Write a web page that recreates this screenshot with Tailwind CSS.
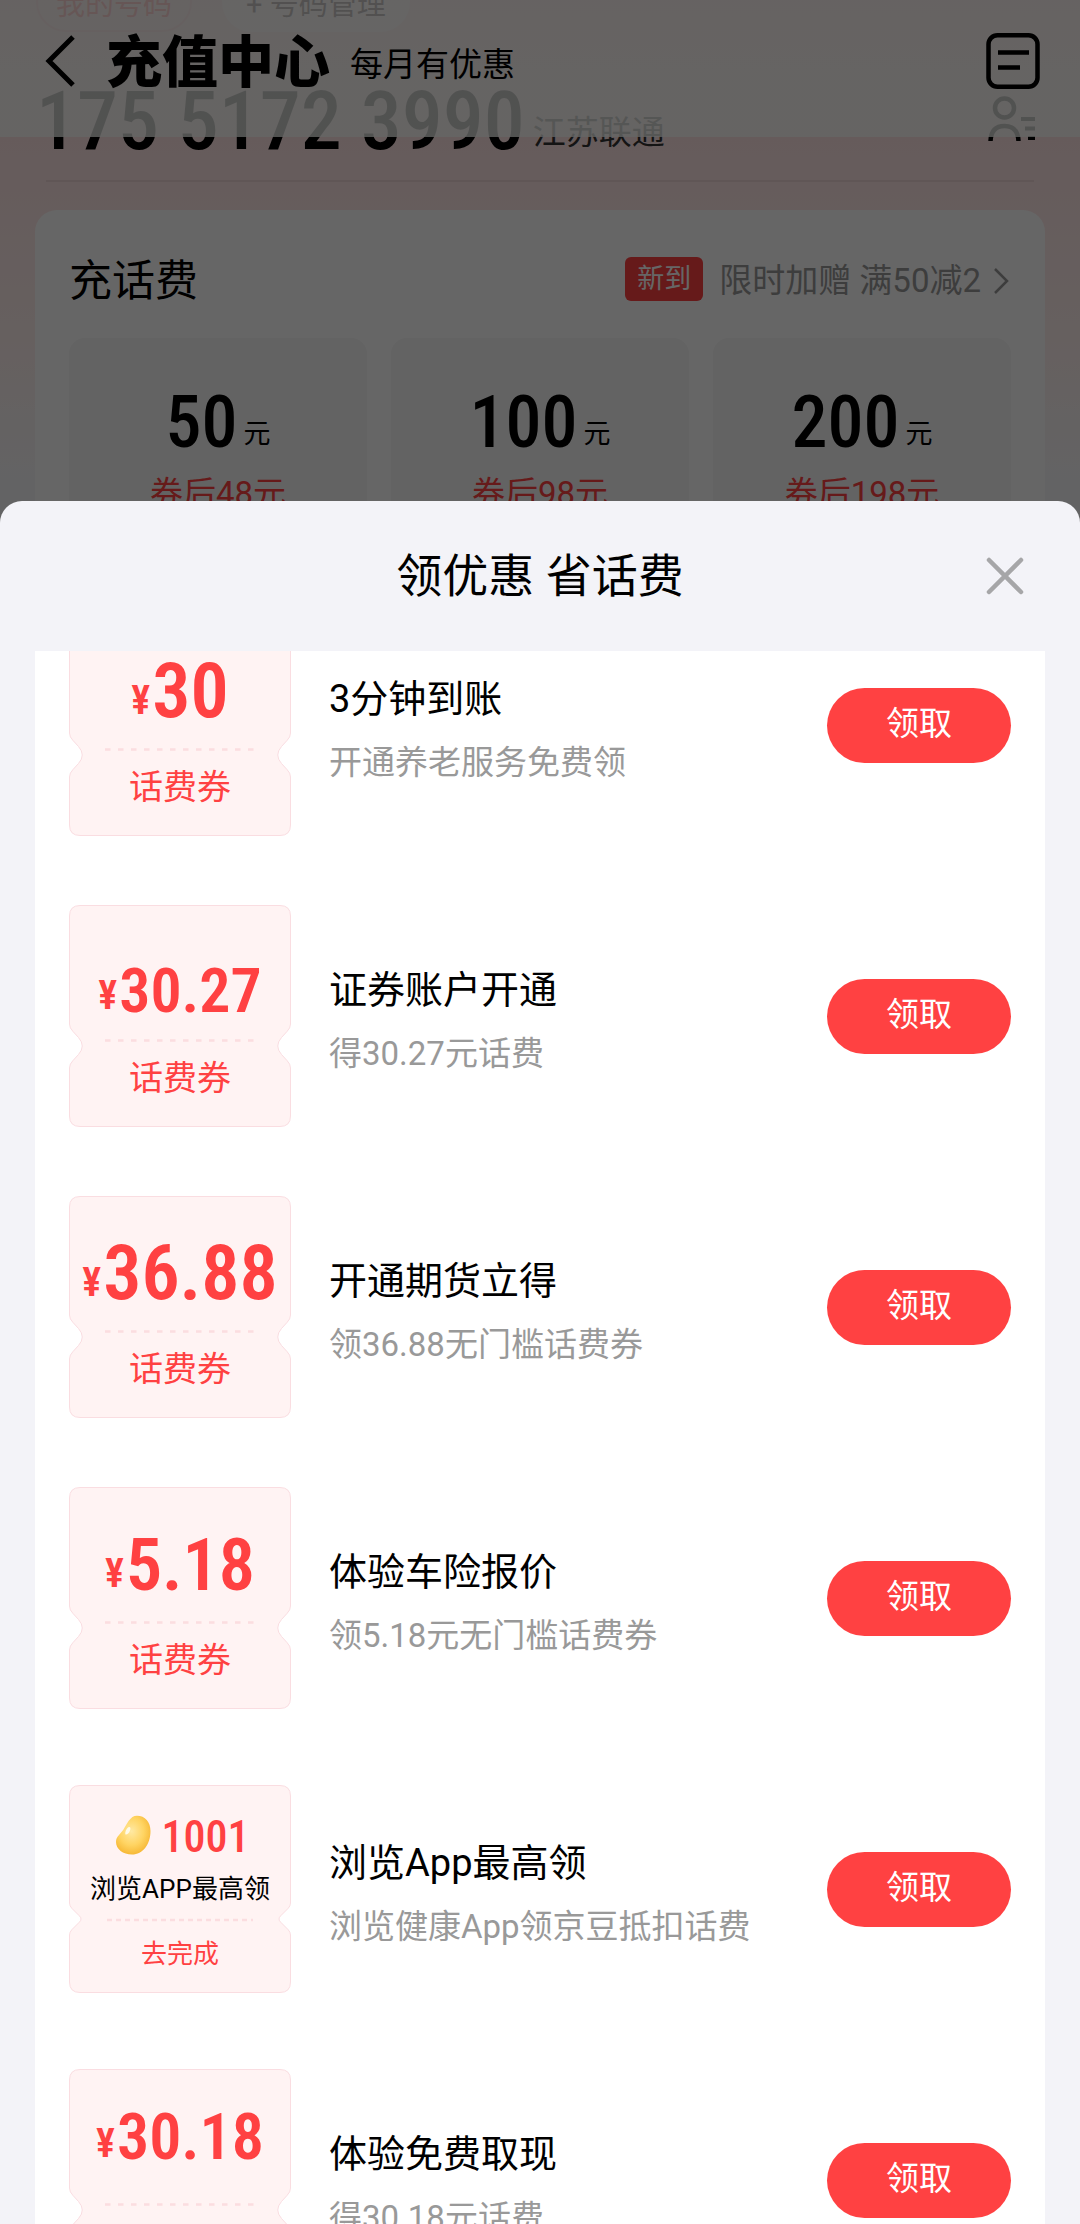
<!DOCTYPE html>
<html lang="zh-CN">
<head>
<meta charset="utf-8">
<meta name="viewport" content="width=device-width, initial-scale=1">
<title>充值中心</title>
<script src="https://cdn.jsdelivr.net/npm/@tailwindcss/browser@4"></script>
</head>
<body class="bg-[#f8f8fa] font-[Roboto,'Noto_Sans_CJK_SC',sans-serif] text-black">
<svg class="hidden" aria-hidden="true">
  <defs>
    <symbol id="ticket" viewBox="0 0 222 222" preserveAspectRatio="none">
      <path d="M11 .5H211Q221.500 .5 221.500 11V119Q221.500 123 218 126.500L212.500 132.500Q205 141 212.500 149.500L218 155.500Q221.500 159 221.500 163V211Q221.500 221.500 211 221.500H11Q.5 221.500 .5 211V163Q.5 159 4 155.500L9.500 149.500Q17 141 9.500 132.500L4 126.500Q.5 123 .5 119V11Q.5 .5 11 .5Z" fill="#fff3f3" stroke="#fadde1"/>
      <path d="M36 135.500H186" stroke="#fbdde0" stroke-width="2.500" stroke-dasharray="5.500 7.500"/>
    </symbol>
  </defs>
</svg>

<div class="relative h-screen overflow-hidden bg-linear-to-b from-[#ffe4e4] from-[137px] via-[#fff0ee] via-[340px] to-[#f8f8fa] to-[480px]">
  <header class="absolute inset-x-0 top-0 z-10 flex h-[137px] items-start justify-between bg-linear-to-b from-[#fffbfa]/80 to-[#fdfffc]/80 to-60% px-10 pt-6">
    <div class="flex items-start">
      <button type="button" aria-label="返回" class="flex h-[74px] w-[66px] items-center pl-1">
        <svg class="h-[52px] w-8" viewBox="0 0 32 52" fill="none" stroke="#000" stroke-width="5"><path d="M29 2L5 26L29 50"/></svg>
      </button>
      <h1 class="pt-0.5 text-[56px] leading-[74px] font-black">充值中心</h1>
      <p class="pt-1 pl-5 text-[33px] leading-[74px]">每月有优惠</p>
    </div>
    <button type="button" aria-label="订单" class="flex h-[74px] items-center">
      <svg class="h-14 w-[54px]" viewBox="0 0 54 56" fill="none" stroke="#000" stroke-width="4.500"><rect x="2.500" y="2.250" width="49" height="51.500" rx="9"/><path d="M12 19.500H43M12 34.500H34"/></svg>
    </button>
  </header>

  <main>
    <nav class="-mt-7 flex gap-[30px] px-9 text-[29px] leading-[66px]">
      <a href="#" class="h-[60px] rounded-full border-2 border-[#ffc4c8] bg-[#ffe6e6] px-[18px] leading-[62px] text-[#ff4142]">我的号码</a>
      <a href="#" class="h-[60px] rounded-full bg-white px-6">+ 号码管理</a>
    </nav>
    <section class="mt-12 flex items-end justify-between pr-10 pl-9">
      <div class="flex items-end gap-2">
        <p class="font-['Roboto_Condensed',Roboto,sans-serif] text-[82px] leading-[82px] font-medium">175 5172 3990</p>
        <p class="pb-[13px] text-[33px] leading-8 text-[#333]">江苏联通</p>
      </div>
      <button type="button" aria-label="通讯录" class="mr-1 mb-5">
        <svg class="h-[46px] w-12" viewBox="0 0 48 46" fill="none" stroke="#000" stroke-width="4.500"><circle cx="16.500" cy="12" r="9.500"/><path d="M2.500 45C3 34 9 30 16.500 30S30 34 30.500 45"/><path d="M33 23H47M37 32.500H47M40 42H47" stroke-width="4"/></svg>
      </button>
    </section>
    <hr class="mx-[46px] mt-[18px] border-t-2 border-[#f0d8d8]">
    <section class="mx-[35px] mt-[28px] rounded-[22px] bg-white px-[34px] pt-[43px] pb-10">
      <div class="flex items-center justify-between">
        <h2 class="text-[43px] leading-[56px]">充话费</h2>
        <a href="#" class="flex items-center text-[33px] leading-[56px] text-[#999]">
          <span class="mr-4 mb-1 rounded-md bg-[#ff4142] px-3 text-[27px] leading-[44px] text-white">新到</span>
          限时加赠 满50减2
          <svg class="mr-0.5 ml-3 h-7 w-4" viewBox="0 0 16 28" fill="none" stroke="currentColor" stroke-width="2.500"><path d="M2 2L14 14L2 26"/></svg>
        </a>
      </div>
      <div class="mt-[29px] grid grid-cols-3 gap-6 text-center">
        <div class="rounded-2xl bg-[#f7f7f7] pt-[50px] pb-8">
          <p class="flex items-end justify-center gap-1.5"><span class="font-['Roboto_Condensed',Roboto,sans-serif] text-[72px] leading-[70px] font-medium">50</span><span class="pb-1.5 text-[27px] leading-9">元</span></p>
          <p class="mt-3 text-[33px] leading-[48px] text-[#ff4142]">券后48元</p>
        </div>
        <div class="rounded-2xl bg-[#f7f7f7] pt-[50px] pb-8">
          <p class="flex items-end justify-center gap-1.5"><span class="font-['Roboto_Condensed',Roboto,sans-serif] text-[72px] leading-[70px] font-medium">100</span><span class="pb-1.5 text-[27px] leading-9">元</span></p>
          <p class="mt-3 text-[33px] leading-[48px] text-[#ff4142]">券后98元</p>
        </div>
        <div class="rounded-2xl bg-[#f7f7f7] pt-[50px] pb-8">
          <p class="flex items-end justify-center gap-1.5"><span class="font-['Roboto_Condensed',Roboto,sans-serif] text-[72px] leading-[70px] font-medium">200</span><span class="pb-1.5 text-[27px] leading-9">元</span></p>
          <p class="mt-3 text-[33px] leading-[48px] text-[#ff4142]">券后198元</p>
        </div>
      </div>
    </section>
  </main>
</div>

<div class="fixed inset-0 z-20 bg-black/60"></div>

<section role="dialog" aria-labelledby="sheet-title" class="fixed inset-x-0 top-[501px] bottom-0 z-30 flex flex-col rounded-t-[22px] bg-[#f3f3f8]">
  <div class="grid h-[150px] shrink-0 grid-cols-[1fr_auto_1fr] items-center">
    <h2 id="sheet-title" class="col-start-2 text-[46px] leading-[60px]">领优惠 省话费</h2>
    <button type="button" aria-label="关闭" class="mr-14 justify-self-end">
      <svg class="size-[38px]" viewBox="0 0 38 38" fill="none" stroke="#a6a6a8" stroke-width="4.500" stroke-linecap="round"><path d="M3 3L35 35M35 3L3 35"/></svg>
    </button>
  </div>
  <div class="mx-[35px] min-h-0 flex-1 overflow-hidden bg-white">
    <ul class="-mt-[37px] flex flex-col gap-[69px] px-[34px]">
      <li class="flex h-[222px] items-center">
        <div class="relative size-[222px] shrink-0 text-center text-[#ff4142]">
          <svg class="absolute inset-0 size-full"><use href="#ticket"/></svg>
          <div class="relative flex h-[135px] flex-col justify-end pb-5 font-['Roboto_Condensed',Roboto,sans-serif] font-semibold">
            <p class="flex items-end justify-center gap-0.5 leading-none"><span class="pb-2 text-[40px]">¥</span><span class="text-[76px] leading-none">30</span></p>
          </div>
          <p class="relative pt-3.5 text-[34px] leading-[48px]">话费券</p>
        </div>
        <div class="min-w-0 flex-1 pt-2 pl-[38px]">
          <h3 class="text-[38px] leading-[56px]">3分钟到账</h3>
          <p class="mt-3 text-[33px] leading-[48px] text-[#999]">开通养老服务免费领</p>
        </div>
        <button type="button" class="h-[75px] w-[184px] shrink-0 rounded-full bg-[#ff4142] pb-0.5 text-[33px] text-white">领取</button>
      </li>
      <li class="flex h-[222px] items-center">
        <div class="relative size-[222px] shrink-0 text-center text-[#ff4142]">
          <svg class="absolute inset-0 size-full"><use href="#ticket"/></svg>
          <div class="relative flex h-[135px] flex-col justify-end pb-[18px] font-['Roboto_Condensed',Roboto,sans-serif] font-semibold">
            <p class="flex items-end justify-center gap-0.5 leading-none"><span class="pb-1.5 text-[40px]">¥</span><span class="text-[62px] leading-none">30.27</span></p>
          </div>
          <p class="relative pt-3.5 text-[34px] leading-[48px]">话费券</p>
        </div>
        <div class="min-w-0 flex-1 pt-2 pl-[38px]">
          <h3 class="text-[38px] leading-[56px]">证券账户开通</h3>
          <p class="mt-3 text-[33px] leading-[48px] text-[#999]">得30.27元话费</p>
        </div>
        <button type="button" class="h-[75px] w-[184px] shrink-0 rounded-full bg-[#ff4142] pb-0.5 text-[33px] text-white">领取</button>
      </li>
      <li class="flex h-[222px] items-center">
        <div class="relative size-[222px] shrink-0 text-center text-[#ff4142]">
          <svg class="absolute inset-0 size-full"><use href="#ticket"/></svg>
          <div class="relative flex h-[135px] flex-col justify-end pb-5 font-['Roboto_Condensed',Roboto,sans-serif] font-semibold">
            <p class="flex items-end justify-center gap-0.5 leading-none"><span class="pb-2 text-[40px]">¥</span><span class="text-[76px] leading-none">36.88</span></p>
          </div>
          <p class="relative pt-3.5 text-[34px] leading-[48px]">话费券</p>
        </div>
        <div class="min-w-0 flex-1 pt-2 pl-[38px]">
          <h3 class="text-[38px] leading-[56px]">开通期货立得</h3>
          <p class="mt-3 text-[33px] leading-[48px] text-[#999]">领36.88无门槛话费券</p>
        </div>
        <button type="button" class="h-[75px] w-[184px] shrink-0 rounded-full bg-[#ff4142] pb-0.5 text-[33px] text-white">领取</button>
      </li>
      <li class="flex h-[222px] items-center">
        <div class="relative size-[222px] shrink-0 text-center text-[#ff4142]">
          <svg class="absolute inset-0 size-full"><use href="#ticket"/></svg>
          <div class="relative flex h-[135px] flex-col justify-end pb-5 font-['Roboto_Condensed',Roboto,sans-serif] font-semibold">
            <p class="flex items-end justify-center gap-0.5 leading-none"><span class="pb-2 text-[40px]">¥</span><span class="text-[72px] leading-none">5.18</span></p>
          </div>
          <p class="relative pt-3.5 text-[34px] leading-[48px]">话费券</p>
        </div>
        <div class="min-w-0 flex-1 pt-2 pl-[38px]">
          <h3 class="text-[38px] leading-[56px]">体验车险报价</h3>
          <p class="mt-3 text-[33px] leading-[48px] text-[#999]">领5.18元无门槛话费券</p>
        </div>
        <button type="button" class="h-[75px] w-[184px] shrink-0 rounded-full bg-[#ff4142] pb-0.5 text-[33px] text-white">领取</button>
      </li>
      <li class="flex h-[222px] items-center">
        <div class="relative h-[208px] w-[222px] shrink-0 text-center text-[#ff4142]">
          <svg class="absolute inset-0 size-full" viewBox="0 0 222 208">
            <path d="M11 .5H211Q221.500 .5 221.500 11V118Q221.500 121 219 123.500L212 130.500Q208 134 212 137.500L219 144.500Q221.500 147 221.500 150V197Q221.500 207.500 211 207.500H11Q.5 207.500 .5 197V150Q.5 147 3 144.500L10 137.500Q14 134 10 130.500L3 123.500Q.5 121 .5 118V11Q.5 .5 11 .5Z" fill="#fff3f3" stroke="#fadde1"/>
            <path d="M38 135H184" stroke="#fbdde0" stroke-width="2.500" stroke-dasharray="5 4"/>
          </svg>
          <div class="relative flex h-[106px] items-end justify-center gap-2.5 pb-8 pl-1">
            <svg class="mb-1 h-10 w-[37px]" viewBox="0 0 37 40">
              <defs>
                <radialGradient id="bean" cx=".45" cy=".4" r=".65"><stop offset="0" stop-color="#ffe9a3"/><stop offset=".55" stop-color="#ffd462"/><stop offset="1" stop-color="#f5b32e"/></radialGradient>
              </defs>
              <path d="M22 .8C30 .8 35.500 7 35.500 16C35.500 29 28 39.500 17 39.500C8 39.500 1 34 1 27C1 21.500 5.500 19 8.500 14.500C12 9 15 .8 22 .8Z" fill="url(#bean)"/>
              <path d="M14.500 12C17 13 14 20 10.500 19.500C9.500 17.500 12 11.500 14.500 12Z" fill="#fffbe8"/>
            </svg>
            <span class="font-['Roboto_Condensed',Roboto,sans-serif] text-[44px] leading-[44px] font-medium">1001</span>
          </div>
          <p class="relative -mt-5 text-[26px] leading-9 text-black">浏览APP最高领</p>
          <p class="relative mt-[29px] text-[26px] leading-9">去完成</p>
        </div>
        <div class="min-w-0 flex-1 pt-2 pl-[38px]">
          <h3 class="text-[38px] leading-[56px]">浏览App最高领</h3>
          <p class="mt-3 text-[33px] leading-[48px] text-[#999]">浏览健康App领京豆抵扣话费</p>
        </div>
        <button type="button" class="h-[75px] w-[184px] shrink-0 rounded-full bg-[#ff4142] pb-0.5 text-[33px] text-white">领取</button>
      </li>
      <li class="flex h-[222px] items-center">
        <div class="relative size-[222px] shrink-0 text-center text-[#ff4142]">
          <svg class="absolute inset-0 size-full"><use href="#ticket"/></svg>
          <div class="relative flex h-[135px] flex-col justify-end pb-[34px] font-['Roboto_Condensed',Roboto,sans-serif] font-semibold">
            <p class="flex items-end justify-center gap-0.5 leading-none"><span class="pb-1.5 text-[40px]">¥</span><span class="text-[64px] leading-none">30.18</span></p>
          </div>
          <p class="relative pt-3.5 text-[34px] leading-[48px]">话费券</p>
        </div>
        <div class="min-w-0 flex-1 pt-2 pl-[38px]">
          <h3 class="text-[38px] leading-[56px]">体验免费取现</h3>
          <p class="mt-3 text-[33px] leading-[48px] text-[#999]">得30.18元话费</p>
        </div>
        <button type="button" class="h-[75px] w-[184px] shrink-0 rounded-full bg-[#ff4142] pb-0.5 text-[33px] text-white">领取</button>
      </li>
    </ul>
  </div>
</section>
</body>
</html>
